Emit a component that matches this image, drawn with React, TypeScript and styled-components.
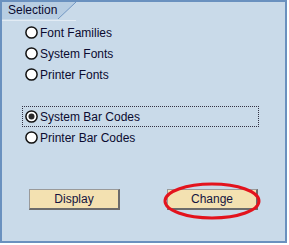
import styled, { createGlobalStyle } from "styled-components";

const GlobalStyle = createGlobalStyle`
  html, body {
    margin: 0;
    padding: 0;
    background: #ffffff;
  }
  body {
    font-family: "Liberation Sans", Arial, sans-serif;
  }
`;

const options = [
  { label: "Font Families", checked: false, focused: false },
  { label: "System Fonts", checked: false, focused: false },
  { label: "Printer Fonts", checked: false, focused: false },
];

const barCodeOptions = [
  { label: "System Bar Codes", checked: true, focused: true },
  { label: "Printer Bar Codes", checked: false, focused: false },
];

const RadioMark = ({ checked }: { checked: boolean }) => (
  <svg width="13" height="13" viewBox="0 0 13 13">
    <circle cx="6.5" cy="6.5" r="5.6" fill="#ffffff" stroke="#111111" strokeWidth="1.5" />
    {checked && <circle cx="6.5" cy="6.5" r="3" fill="#2a2a2a" />}
  </svg>
);

const App = () => {
  return (
    <>
      <GlobalStyle />
      <Panel>
        <TabRow>
          <Tab>Selection</Tab>
          <TabSlant>
            <svg width="18" height="17" viewBox="0 0 18 17">
              <polygon points="0,0 18,0 0,17" fill="#b7cde2" />
              <line x1="18" y1="0" x2="0" y2="17" stroke="#7196c2" strokeWidth="1" />
            </svg>
          </TabSlant>
        </TabRow>

        <OptionGroup>
          {options.map((o) => (
            <OptionRow key={o.label} $focused={o.focused}>
              <RadioMark checked={o.checked} />
              <Label>{o.label}</Label>
            </OptionRow>
          ))}
        </OptionGroup>

        <OptionGroup $gap>
          {barCodeOptions.map((o) => (
            <OptionRow key={o.label} $focused={o.focused}>
              <RadioMark checked={o.checked} />
              <Label>{o.label}</Label>
            </OptionRow>
          ))}
        </OptionGroup>

        <ButtonBar>
          <Button>Display</Button>
          <Highlight>
            <Button>Change</Button>
            <Ring width="98" height="38" viewBox="0 0 98 38">
              <ellipse cx="49" cy="19" rx="47" ry="17" fill="none" stroke="#e3131d" strokeWidth="3" />
            </Ring>
          </Highlight>
        </ButtonBar>
      </Panel>
    </>
  );
};

export default App;

const Panel = styled.div`
  box-sizing: border-box;
  width: 287px;
  height: 243px;
  background: #c9dae9;
  border: 2px solid #6a91bf;
  border-top-width: 2px;
  display: flex;
  flex-direction: column;
`;

const TabRow = styled.div`
  display: flex;
  height: 18px;
  border-bottom: 1px solid #e2ebf4;
  width: 74px;
`;

const Tab = styled.div`
  width: 50px;
  height: 17px;
  padding-left: 6px;
  background: #b7cde2;
  font-size: 12px;
  line-height: 17px;
  color: #0b0b30;
`;

const TabSlant = styled.div`
  width: 18px;
  height: 17px;
  svg {
    display: block;
  }
`;

const OptionGroup = styled.div<{ $gap?: boolean }>`
  display: flex;
  flex-direction: column;
  padding-left: 20px;
  margin-top: ${(p) => (p.$gap ? "21px" : "1px")};
`;

const OptionRow = styled.div<{ $focused: boolean }>`
  box-sizing: border-box;
  width: 237px;
  height: 21px;
  display: flex;
  align-items: center;
  gap: 2px;
  padding-left: 2px;
  border: 1px dotted ${(p) => (p.$focused ? "#333344" : "transparent")};
  svg {
    display: block;
    flex: none;
  }
`;

const Label = styled.span`
  font-size: 12px;
  color: #0b0b30;
  line-height: 14px;
`;

const ButtonBar = styled.div`
  display: flex;
  align-items: flex-start;
  gap: 47px;
  padding-left: 27px;
  margin-top: 41px;
`;

const Highlight = styled.div`
  position: relative;
`;

const Ring = styled.svg`
  position: absolute;
  left: -4px;
  top: -7px;
  pointer-events: none;
`;

const Button = styled.div`
  box-sizing: border-box;
  width: 91px;
  height: 21px;
  background: #f3e1b1;
  border: 1px solid #9a9a9a;
  border-right: 2px solid #6b6b6b;
  border-bottom: 2px solid #6b6b6b;
  display: flex;
  align-items: center;
  justify-content: center;
  font-size: 12px;
  color: #141440;
`;
